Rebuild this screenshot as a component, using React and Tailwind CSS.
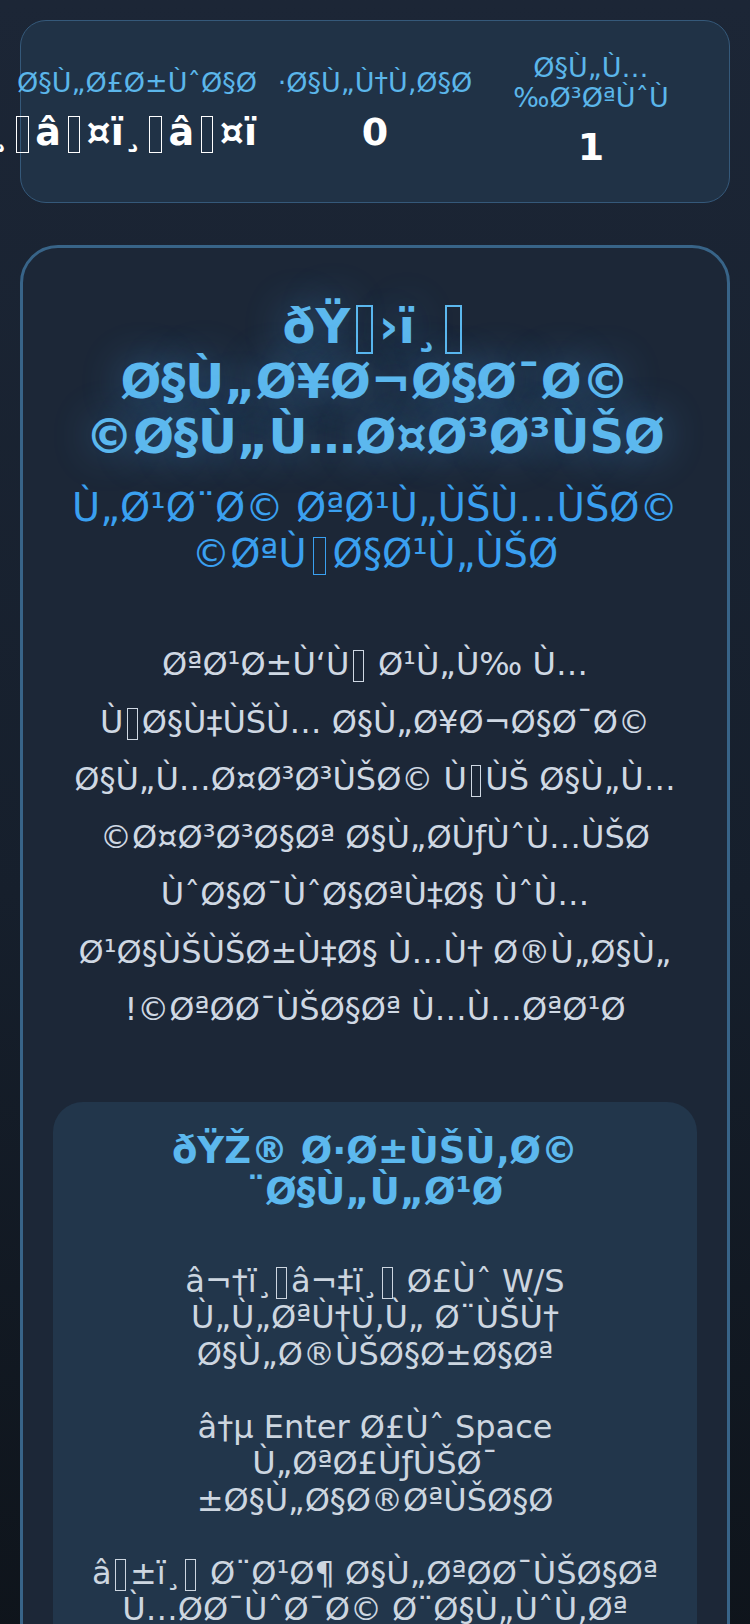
import React from 'react';

// the page shows UTF-8 Arabic read back as windows-1252
const garble = (s) => new TextDecoder('windows-1252').decode(new TextEncoder().encode(s));

// C1 control bytes show up as empty boxes in the reference
const Mojibake = ({ text, wide }) => {
  const parts = [];
  let buf = '';
  for (const ch of garble(text)) {
    const c = ch.codePointAt(0);
    if (c >= 0x80 && c <= 0x9f) {
      if (buf) parts.push(buf);
      buf = '';
      parts.push(
        <span
          key={parts.length}
          className={
            (wide ? 'mx-[0.22em] ' : 'mx-[0.15em] ') +
            'border-[0.06em] border-current px-[0.17em] text-[0.8em] leading-none'
          }
        >
          {'\u2060'}
        </span>
      );
    } else {
      buf += ch;
    }
  }
  if (buf) parts.push(buf);
  return <>{parts}</>;
};

const stats = [
  { label: 'المستوى', value: '1' },
  { label: 'النقاط', value: '0' },
  { label: 'الأرواح', value: '❤️❤️❤️' },
];

const steps = [
  '⬆️⬇️ أو W/S للتنقل بين الخيارات',
  '↵ Enter أو Space لتأكيد الاختيار',
  '⏱️ بعض التحديات محدودة بالوقت',
];

export default function App() {
  return (
    <div
      dir="rtl"
      className="min-h-screen overflow-hidden bg-gradient-to-b from-[#1c2636] via-[#161f2c] to-[#0d1218] px-5 pt-5 pb-10 text-center font-['DejaVu_Sans',sans-serif]"
    >
      {/* stats bar */}
      <div className="grid grid-cols-3 items-center gap-5 rounded-[26px] border border-[#35597a] bg-[#203246] px-10 pt-8 pb-[33px]">
        {stats.map((s, i) => (
          <div key={i}>
            <div className="text-[27px] leading-[30px] text-[#5bb6ea]">
              <Mojibake text={s.label} />
            </div>
            <div className="mt-3 whitespace-nowrap text-[38px] font-bold leading-[44px] text-white">
              <Mojibake text={s.value} wide />
            </div>
          </div>
        ))}
      </div>

      {/* main card */}
      <div className="mt-[42px] rounded-[38px] border-[3px] border-[#386488] bg-[#1c2737] px-[30px] pt-[51px] pb-16">
        <h1 className="text-[48px] font-bold leading-[55px] text-[#5cb8ee] [text-shadow:0_0_40px_rgba(79,172,254,0.45)]">
          <Mojibake text="🏛️ الإجادة المؤسسية" />
        </h1>
        <p className="mt-[21px] text-[38.4px] leading-[46px] text-[#3aa0f0]">
          <Mojibake text="لعبة تعليمية تفاعلية" wide />
        </p>
        <p className="mt-[59px] text-[32px] leading-[57.5px] text-[#cfd8e3]">
          <Mojibake text="تعرّف على مفاهيم الإجادة المؤسسية في المؤسسات الحكومية" />
          <br />
          <Mojibake text="وادواتها ومعاييرها من خلال تحديات ممتعة!" />
        </p>

        {/* how to play */}
        <div className="mt-[63px] rounded-[30px] bg-[#22364b] px-9 pt-7 pb-12">
          <h2 className="text-[37px] font-bold leading-[41px] text-[#5cb8ee]">
            <Mojibake text="🎮 طريقة اللعب" />
          </h2>
          <div className="mt-[51px] flex flex-col gap-[36.5px] text-[32px] leading-[36.5px] text-[#cdd6e0]">
            {steps.map((t, i) => (
              <p key={i}>
                <Mojibake text={t} />
              </p>
            ))}
          </div>
        </div>
      </div>
    </div>
  );
}
